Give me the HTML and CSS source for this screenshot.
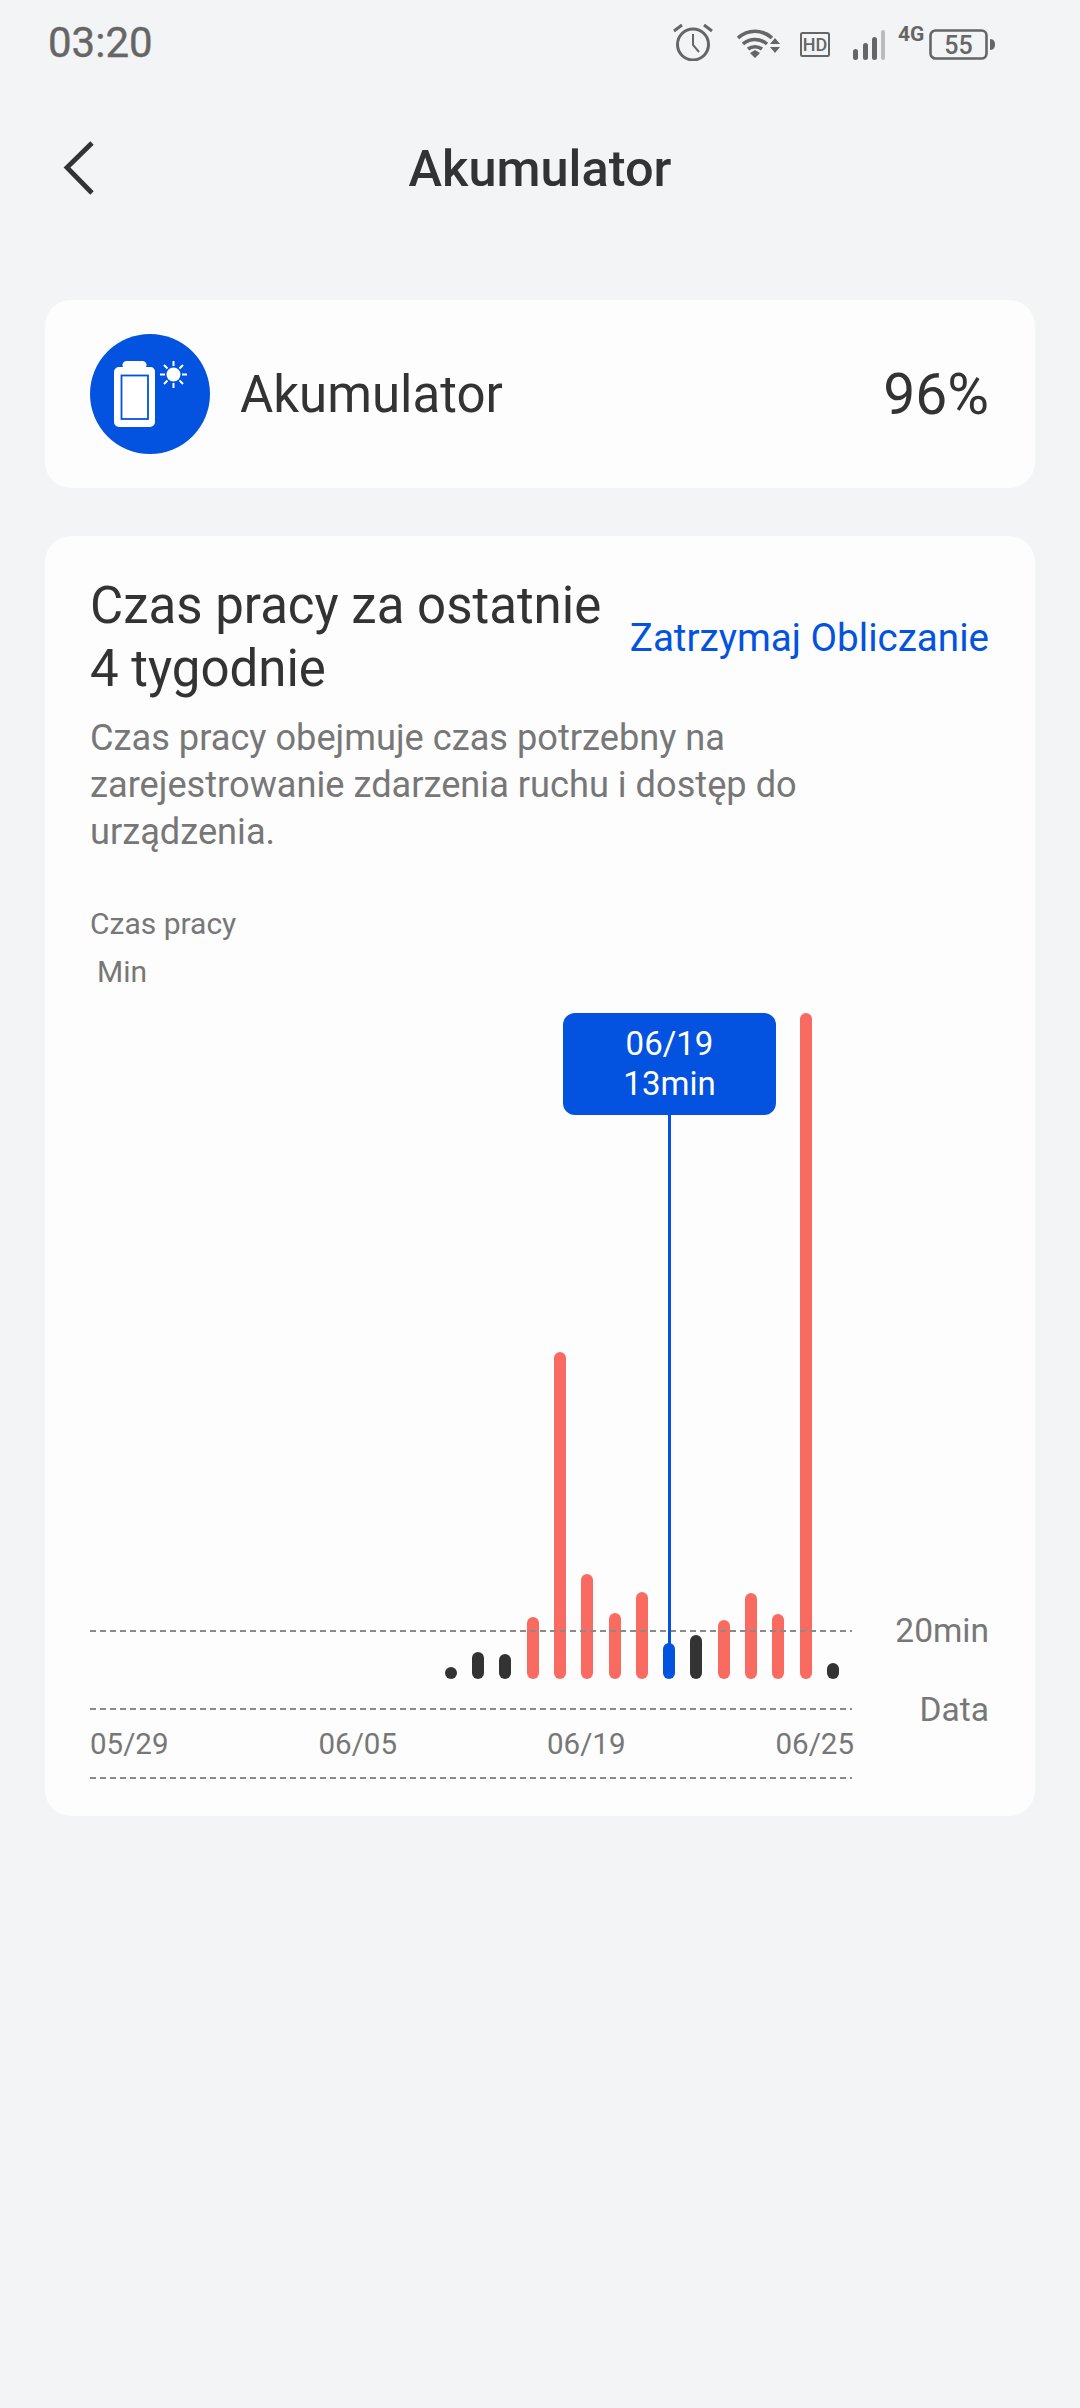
FILE: index.html
```html
<!DOCTYPE html>
<html lang="pl">

<head>
    <meta charset="UTF-8">
    <meta name="viewport" content="width=device-width, initial-scale=1.0">
    <title>Akumulator</title>
    <link rel="stylesheet" href="styles.css">
</head>

<body>
    <div class="status-bar">
        <span class="clock">03:20</span>
        <div class="status-icons">
            <svg class="icon-alarm" width="40" height="38" viewBox="0 0 40 38">
                <circle cx="20" cy="21.5" r="15.5" fill="none" stroke="#666" stroke-width="3" />
                <path d="M20 11v11l6 7" fill="none" stroke="#666" stroke-width="2" />
                <path d="M1 8l8-6M39 8l-8-6" fill="none" stroke="#666" stroke-width="3" />
            </svg>
            <svg class="icon-wifi" width="46" height="30" viewBox="0 0 46 30">
                <path d="M2 9C12 0 26 0 36 9M7 15c7-6 17-6 24 0M12 20c4-3 10-3 14 0" fill="none" stroke="#666" stroke-width="3.6" />
                <path d="M14 24l5-3 5 3-5 5zM39 9l5 6H34zM34 18h10l-5 6z" fill="#666" />
            </svg>
            <svg class="icon-hd" width="30" height="25" viewBox="0 0 30 25">
                <rect x="1" y="1" width="28" height="23" rx="1.5" fill="none" stroke="#666" stroke-width="2" />
                <text x="15" y="19" class="icon-text hd-text" text-anchor="middle">HD</text>
            </svg>
            <svg class="icon-signal" width="34" height="31" viewBox="0 0 34 31">
                <rect x="1" y="20" width="5" height="11" rx="2.5" fill="#666" />
                <rect x="11" y="14" width="5" height="17" rx="2.5" fill="#666" />
                <rect x="20" y="8" width="5" height="23" rx="2.5" fill="#666" />
                <rect x="29" y="1" width="4" height="30" rx="2" fill="#bbb" />
            </svg>
            <span class="net-text">4G</span>
            <svg class="icon-battery" width="66" height="31" viewBox="0 0 66 31">
                <rect x="1.5" y="1.5" width="56" height="28" rx="5" fill="none" stroke="#666" stroke-width="2.6" />
                <text x="29.5" y="25" class="icon-text battery-text" text-anchor="middle">55</text>
                <path d="M61 10c4 0 5 3 5 5.500s-1 5.500-5 5.500z" fill="#666" />
            </svg>
        </div>
    </div>

    <header class="header">
        <a class="back" href="#">
            <svg width="32" height="54" viewBox="0 0 32 54">
                <path d="M29 2L4 26.500 29 52" fill="none" stroke="#333" stroke-width="4.800" />
            </svg>
        </a>
        <h1>Akumulator</h1>
    </header>

    <section class="card battery-card">
        <div class="battery-badge">
            <svg width="120" height="120" viewBox="0 0 120 120">
                <circle cx="60" cy="60" r="60" fill="#0353e0" />
                <path d="M37 27h15a4 4 0 0 1 4 6h5a5 5 0 0 1 4 5v50a5 5 0 0 1-5 5H29a5 5 0 0 1-5-5V38a5 5 0 0 1 5-5h4a4 4 0 0 1 4-6z" fill="#fff" />
                <rect x="31.500" y="41.500" width="26.500" height="43.500" fill="#fff" stroke="#0353e0" stroke-width="1.800" />
                <circle cx="83.500" cy="40.500" r="7" fill="#fff" />
                <path d="M83.500 27v5M83.500 49v5M70 40.500h5M92 40.500h5M74 31l3.500 3.500M89.500 46.500L93 50M74 50l3.500-3.500M89.500 34.500L93 31" stroke="#fff" stroke-width="2" fill="none" />
            </svg>
        </div>
        <span class="battery-name">Akumulator</span>
        <span class="battery-value">96%</span>
    </section>

    <section class="card usage-card">
        <div class="usage-head">
            <h2>Czas pracy za ostatnie<br>4 tygodnie</h2>
            <a class="stop-link" href="#">Zatrzymaj Obliczanie</a>
        </div>
        <p class="usage-desc">Czas pracy obejmuje czas potrzebny na<br>zarejestrowanie zdarzenia ruchu i dostęp do<br>urządzenia.</p>
        <div class="axis-title">Czas pracy</div>
        <div class="axis-unit">Min</div>

        <div class="chart">
            <div class="plot">
                <div class="bars">
                    <div class="bar" style="height: 12px"></div>
                    <div class="bar" style="height: 27px"></div>
                    <div class="bar" style="height: 25px"></div>
                    <div class="bar high" style="height: 62px"></div>
                    <div class="bar high" style="height: 327px"></div>
                    <div class="bar high" style="height: 105px"></div>
                    <div class="bar high" style="height: 66px"></div>
                    <div class="bar high" style="height: 87px"></div>
                    <div class="bar selected" style="height: 36px"></div>
                    <div class="bar" style="height: 44px"></div>
                    <div class="bar high" style="height: 59px"></div>
                    <div class="bar high" style="height: 86px"></div>
                    <div class="bar high" style="height: 65px"></div>
                    <div class="bar high" style="height: 666px"></div>
                    <div class="bar" style="height: 16px"></div>
                </div>
                <div class="dash threshold"></div>
                <div class="marker">
                    <div class="tooltip">06/19<br>13min</div>
                    <div class="marker-line"></div>
                </div>
                <span class="side-label label-limit">20min</span>
                <span class="side-label label-date">Data</span>
            </div>
            <div class="dash"></div>
            <div class="dates">
                <span>05/29</span>
                <span>06/05</span>
                <span>06/19</span>
                <span>06/25</span>
            </div>
            <div class="dash"></div>
        </div>
    </section>
</body>

</html>
```
FILE: styles.css
```css
* {
    box-sizing: border-box;
}

body {
    margin: 0;
    height: 2408px;
    overflow: hidden;
    font-family: Roboto, "Noto Sans", sans-serif;
    background-color: #f3f4f6;
    color: #333;
}

a {
    text-decoration: none;
}

.status-bar {
    display: flex;
    justify-content: space-between;
    align-items: center;
    height: 84px;
    padding: 0 85px 0 48px;
}

.clock {
    font-size: 42px;
    color: #666;
    -webkit-text-stroke: 0.4px #666;
}

.status-icons {
    display: flex;
    align-items: flex-start;
    height: 40px;
}

.icon-alarm {
    margin-top: 1px;
    margin-right: 23px;
}

.icon-wifi {
    margin-top: 7px;
    margin-right: 18px;
}

.icon-hd {
    margin-top: 10px;
    margin-right: 22px;
}

.icon-signal {
    margin-top: 7px;
    margin-right: 12px;
}

.icon-battery {
    margin-top: 7px;
}

.icon-text {
    font-family: Roboto, sans-serif;
    fill: #666;
}

.hd-text {
    font-size: 18px;
    font-weight: 500;
}

.net-text {
    width: 28px;
    margin-top: 2px;
    margin-right: 3px;
    font-size: 21px;
    font-weight: 700;
    line-height: 20px;
    color: #666;
}

.battery-text {
    font-size: 25px;
    font-weight: 500;
}

.header {
    display: grid;
    grid-template-columns: 1fr auto 1fr;
    align-items: center;
    height: 168px;
    margin-bottom: 48px;
}

.back {
    display: flex;
    padding-left: 63px;
}

h1 {
    margin: 0;
    font-size: 50.500px;
    font-weight: 500;
}

.card {
    margin: 0 45px;
    background: #fdfdfd;
    border-radius: 26px;
}

.battery-card {
    display: flex;
    align-items: center;
    height: 188px;
    padding: 0 46px 0 45px;
    margin-bottom: 48px;
}

.battery-badge {
    display: flex;
    margin-right: 30px;
}

.battery-name {
    flex: 1;
    font-size: 51px;
}

.battery-value {
    font-size: 57px;
}

.usage-card {
    height: 1280px;
    padding: 38px 46px 0 45px;
}

.usage-head {
    display: flex;
    justify-content: space-between;
    align-items: center;
}

h2 {
    margin: 0;
    font-size: 51px;
    font-weight: 400;
    line-height: 63px;
}

.stop-link {
    font-size: 38.600px;
    color: #0353e0;
}

.usage-desc {
    margin: 14px 0 0;
    font-size: 36.200px;
    line-height: 47px;
    color: #777;
}

.axis-title {
    margin-top: 45px;
    font-size: 30px;
    line-height: 48px;
    color: #777;
}

.axis-unit {
    padding-left: 7px;
    font-size: 30px;
    line-height: 48px;
    color: #777;
}

.chart {
    margin-top: 17px;
    width: 762px;
}

.plot {
    position: relative;
    height: 695px;
}

.bars {
    display: flex;
    align-items: flex-end;
    gap: 15.300px;
    height: 666px;
    margin-left: 354.800px;
}

.bar {
    flex: none;
    width: 12px;
    border-radius: 6px;
    background: #333;
}

.bar.high {
    background: #f96a60;
}

.bar.selected {
    background: #0353e0;
}

.dash {
    height: 2px;
    background: repeating-linear-gradient(90deg, #8a8a8a 0 6px, transparent 6px 10px);
}

.threshold {
    position: absolute;
    left: 0;
    right: 0;
    top: 617px;
}

.marker {
    position: absolute;
    left: 473px;
    top: 0;
    display: flex;
    flex-direction: column;
    align-items: center;
}

.tooltip {
    width: 213px;
    height: 102px;
    padding-top: 11px;
    background: #0353e0;
    border-radius: 12px;
    color: #fff;
    font-size: 33px;
    line-height: 40px;
    text-align: center;
}

.marker-line {
    width: 3px;
    height: 540px;
    background: #0353e0;
}

.side-label {
    position: absolute;
    right: -137px;
    font-size: 33.500px;
    line-height: 40px;
    color: #777;
}

.label-limit {
    top: 598px;
}

.label-date {
    top: 677px;
}

.dates {
    display: grid;
    grid-template-columns: repeat(4, 228.500px);
    height: 67px;
    align-items: center;
    font-size: 29.500px;
    color: #777;
}
```
